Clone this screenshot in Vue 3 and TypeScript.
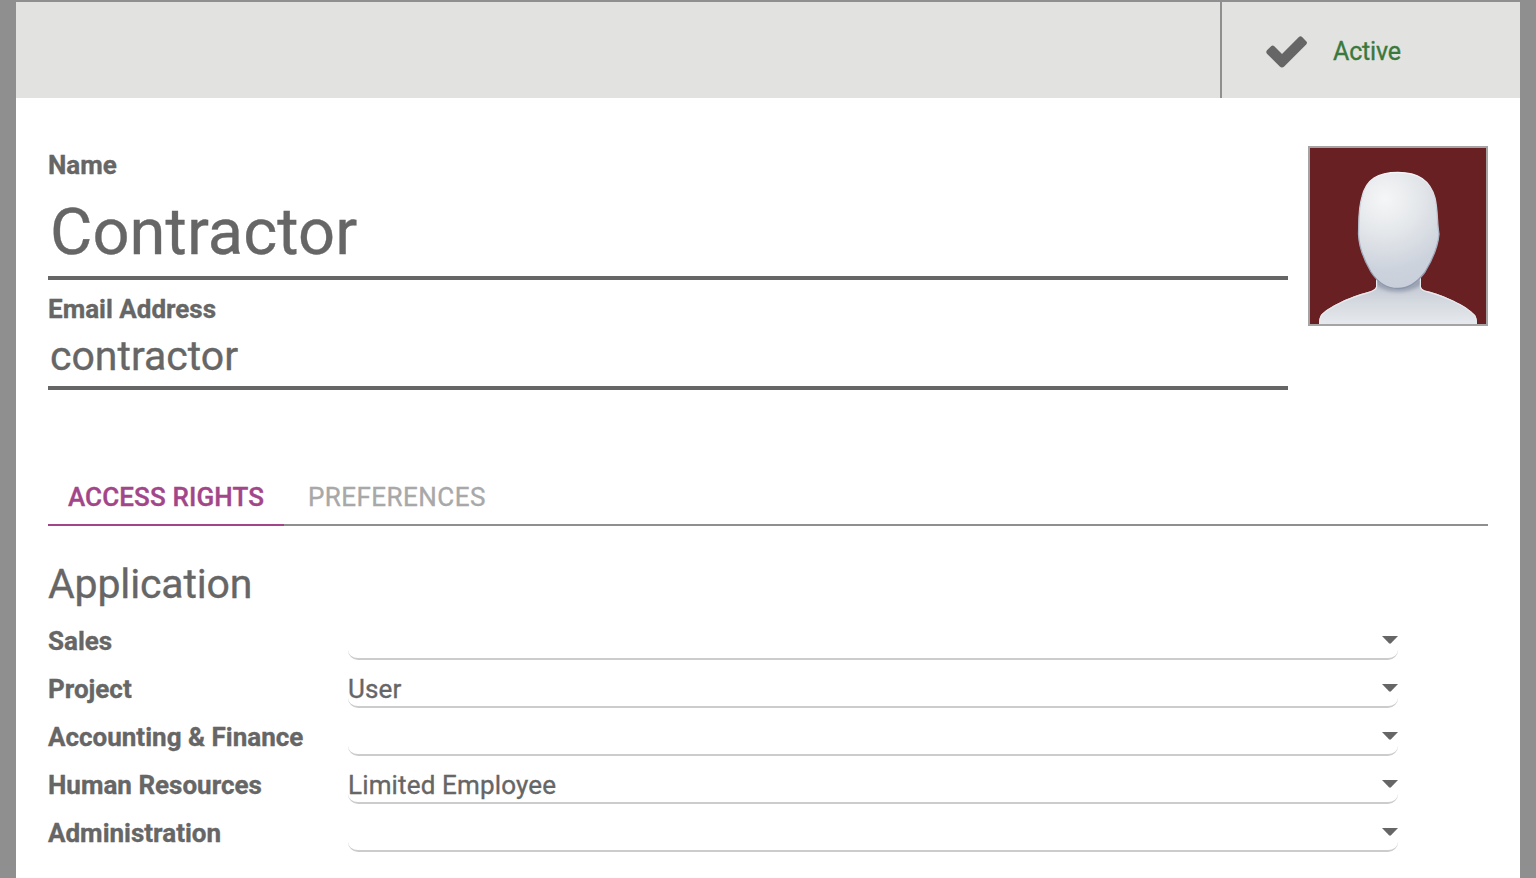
<script setup lang="ts">
import { ref } from 'vue'

interface AccessRow {
  label: string
  value: string
  cls: string
}

const tabs = ['Access Rights', 'Preferences']
const activeTab = ref(0)

const rows: AccessRow[] = [
  { label: 'Sales', value: '', cls: 'sales' },
  { label: 'Project', value: 'User', cls: 'project' },
  { label: 'Accounting & Finance', value: '', cls: 'accounting' },
  { label: 'Human Resources', value: 'Limited Employee', cls: 'hr' },
  { label: 'Administration', value: '', cls: 'admin' },
]
</script>

<template>
  <div class="backdrop">
    <main class="sheet">
      <header class="button-box">
        <button class="status" type="button">
          <svg class="check" viewBox="0 0 42 32" width="42" height="32">
            <path
              d="M1.2 14.1 5.1 10.2Q6.7 8.7 8.3 10.2L16 18 32.9 1.1Q34.5-.5 36.1 1.1L40.2 5.2Q41.8 6.8 40.2 8.4L18.2 30.5Q16 32.6 13.8 30.5L1.2 17.9Q-.7 16 1.2 14.1Z"
            />
          </svg>
          <span class="status-text">Active</span>
        </button>
      </header>

      <div class="content">
        <section class="identity">
          <div class="fields">
            <label class="label">Name</label>
            <div class="input name"><span>Contractor</span></div>
            <label class="label email-label">Email Address</label>
            <div class="input email"><span>contractor</span></div>
          </div>
          <svg class="avatar" viewBox="0 0 180 180" width="180" height="180">
            <defs>
              <radialGradient id="face" gradientUnits="userSpaceOnUse" cx="77" cy="53" r="94">
                <stop offset="0" stop-color="#f5f6f7" />
                <stop offset="0.35" stop-color="#e5e8eb" />
                <stop offset="0.75" stop-color="#cdd3dd" />
                <stop offset="1" stop-color="#c9cfda" />
              </radialGradient>
              <linearGradient id="body" x1="0" y1="0" x2="0" y2="1">
                <stop offset="0" stop-color="#b9c0cc" />
                <stop offset="0.5" stop-color="#d3d8df" />
                <stop offset="1" stop-color="#e6e9ec" />
              </linearGradient>
              <linearGradient id="edge" x1="0" y1="0" x2="0" y2="1">
                <stop offset="0" stop-color="#f4f6f8" />
                <stop offset="0.4" stop-color="#b9c2d0" />
                <stop offset="1" stop-color="#8a96ab" />
              </linearGradient>
              <filter id="soft" x="-20%" y="-50%" width="140%" height="200%"><feGaussianBlur stdDeviation="2" /></filter>
              <filter id="smooth"><feGaussianBlur stdDeviation="0.5" /></filter>
              <clipPath id="torso">
                <path d="M68 130V141Q67 144 60 146C41 151 20 161 13 169Q11 172 11 178H169Q169 172 167 169C158 159 135 149 119 145Q114 144 113 141V130Z" />
              </clipPath>
            </defs>
            <rect width="180" height="180" fill="#a5a3a3" />
            <rect x="2" y="2" width="176" height="176" fill="#682022" />
            <g clip-path="url(#torso)">
              <rect x="2" y="130" width="176" height="48" fill="url(#body)" />
              <path d="M57 122Q68 143 90 143T124 122" fill="none" stroke="#8790a1" stroke-width="4" filter="url(#soft)" />
              <path d="M11 178Q11 172 13 169C20 161 41 151 60 146Q67 144 68 141V130M113 130V141Q114 144 119 145C135 149 158 159 167 169Q169 172 169 178" fill="none" stroke="#e6e9ee" stroke-width="2.4" filter="url(#smooth)" />
            </g>
            <path
              d="M90 26.5C110 26.5 122 34 127 52C130 65 129 77 131 88C130 101 123 116 117 126C109 137 100 142.500 90 142.500C80 142.500 70 137 63 126C56 114 51 102 50.500 88C51 76 50 64 54 51C58 33 70 26.500 90 26.500Z"
              fill="url(#face)"
              stroke="url(#edge)"
              stroke-width="1.3"
              filter="url(#smooth)"
            />
          </svg>
        </section>

        <nav class="tabs">
          <button
            v-for="(tab, i) in tabs"
            :key="tab"
            type="button"
            class="tab"
            :class="{ active: activeTab === i }"
            @click="activeTab = i"
          >
            <span>{{ tab }}</span>
          </button>
        </nav>

        <h2 class="group-title">Application</h2>
        <div v-for="row in rows" :key="row.label" class="row">
          <label class="label row-label" :class="row.cls">{{ row.label }}</label>
          <div class="select">
            <span>{{ row.value }}</span>
            <svg class="caret" viewBox="0 0 16 8" width="16" height="8">
              <path d="M0 0H16L9 7.300Q8 8.200 7 7.300Z" />
            </svg>
          </div>
        </div>
      </div>
    </main>
  </div>
</template>

<style>
body {
  margin: 0;
  overflow: hidden;
}
</style>

<style scoped>
.backdrop {
  box-sizing: border-box;
  height: 878px;
  padding: 2px 16px 0;
  background: #8f8f8f;
  overflow: hidden;
  font-family: Roboto, "Liberation Sans", sans-serif;
  font-size: 26px;
  color: #666;
  -webkit-text-stroke: 0.35px currentColor;
}
button {
  margin: 0;
  padding: 0;
  border: 0;
  background: none;
  font: inherit;
}
.sheet {
  height: 876px;
  background: #fff;
}
.button-box {
  display: flex;
  justify-content: flex-end;
  height: 96px;
  background: #e2e2e0;
}
.status {
  box-sizing: border-box;
  display: flex;
  align-items: center;
  width: 300px;
  padding-left: 44px;
  border-left: 2px solid #8f8f8f;
}
.check {
  flex: none;
  margin-top: 4px;
  fill: #666;
}
.status-text {
  margin-left: 25px;
  margin-top: 2px;
  color: #3a793c;
  font-size: 25px;
  letter-spacing: -0.15px;
}
.content {
  padding: 48px 32px 0;
}
.identity {
  display: flex;
  justify-content: space-between;
  height: 322px;
}
.fields {
  width: 1240px;
}
.avatar {
  flex: none;
}
.label {
  display: block;
  height: 38px;
  line-height: 38px;
  font-weight: 700;
  white-space: nowrap;
}
.input {
  box-sizing: border-box;
  padding-left: 2px;
  border-bottom: 4px solid #666;
}
.name {
  height: 96px;
  line-height: 96px;
  font-size: 65px;
  letter-spacing: 0.1px;
}
.email-label {
  padding-top: 10px;
}
.email {
  height: 62px;
  line-height: 56px;
  font-size: 41px;
}
.tabs {
  display: flex;
  height: 56px;
  border-bottom: 2px solid #8f8f8f;
}
.tab {
  box-sizing: border-box;
  height: 58px;
  padding: 0 22px 0 24px;
  border-bottom: 2px solid transparent;
  line-height: 58px;
  text-transform: uppercase;
  letter-spacing: 0.45px;
  color: #a8a8a8;
  white-space: nowrap;
}
.tab.active {
  width: 236px;
  padding: 0 19px;
  border-bottom-color: #a24689;
  color: #a24689;
  font-weight: 500;
  letter-spacing: 0.12px;
}
.group-title {
  height: 67px;
  margin: 24px 0 0;
  line-height: 68px;
  font-size: 41px;
  font-weight: 400;
  letter-spacing: -0.15px;
}
.row {
  display: flex;
  height: 48px;
}
.row-label {
  width: 300px;
  height: 48px;
  line-height: 48px;
}
.select {
  box-sizing: border-box;
  display: flex;
  justify-content: space-between;
  width: 1050px;
  height: 43px;
  border-bottom: 2px solid #ccc;
  border-radius: 0 0 10px 10px;
  line-height: 48px;
  letter-spacing: 0.15px;
}
.caret {
  margin-top: 19px;
  fill: #666;
}
</style>
